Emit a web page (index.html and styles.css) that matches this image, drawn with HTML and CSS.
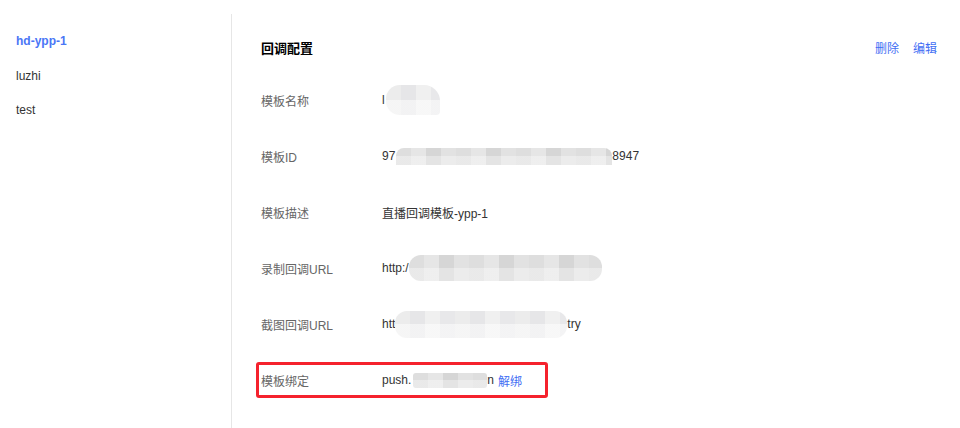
FILE: index.html
```html
<!DOCTYPE html>
<html lang="zh-CN">
<head>
  <meta charset="UTF-8">
  <title>回调配置</title>
  <link rel="stylesheet" href="styles.css">
</head>
<body>
  <div class="layout">
    <!-- 模板列表 -->
    <div class="sidebar">
      <div class="side-item active">hd-ypp-1</div>
      <div class="side-item">luzhi</div>
      <div class="side-item">test</div>
    </div>

    <!-- 详情 -->
    <div class="main">
      <div class="header">
        <span class="title">回调配置</span>
        <span class="actions">
          <a class="link">删除</a>
          <a class="link">编辑</a>
        </span>
      </div>

      <div class="row">
        <span class="label">模板名称</span>
        <span class="value">l<span class="blur blur-light name-blur"></span></span>
      </div>
      <div class="row">
        <span class="label">模板ID</span>
        <span class="value">97<span class="blur id-blur"></span>8947</span>
      </div>
      <div class="row">
        <span class="label">模板描述</span>
        <span class="value">直播回调模板-ypp-1</span>
      </div>
      <div class="row">
        <span class="label">录制回调URL</span>
        <span class="value">http:/<span class="blur rec-blur"></span></span>
      </div>
      <div class="row">
        <span class="label">截图回调URL</span>
        <span class="value">htt<span class="blur blur-light snap-blur"></span>try</span>
      </div>
      <div class="row">
        <div class="mark">
          <span class="label">模板绑定</span>
          <span class="value">push.<span class="blur push-blur"></span>n<a class="link unbind">解绑</a></span>
        </div>
      </div>
    </div>
  </div>
</body>
</html>
```

FILE: styles.css
```css
body {
  margin: 0;
  font-family: "Liberation Sans", Arial, "Noto Sans CJK SC", sans-serif;
  font-size: 12px;
  color: #333;
  background: #fff;
}
.layout {
  display: flex;
  min-height: 100vh;
  padding-top: 14px;
  box-sizing: border-box;
}
.sidebar {
  width: 232px;
  flex-shrink: 0;
  border-right: 1px solid #e6e6e6;
  padding-top: 10px;
  box-sizing: border-box;
}
.side-item {
  height: 34.5px;
  line-height: 34px;
  padding-left: 16px;
  color: #333;
}
.side-item.active {
  color: #4a76f6;
  font-weight: bold;
}
.main {
  flex: 1;
  padding: 0 23px 0 29px;
}
.header {
  display: flex;
  justify-content: space-between;
  align-items: center;
  padding-top: 25px;
  line-height: 20px;
  margin-bottom: 13px;
}
.title {
  font-size: 13px;
  font-weight: bold;
  color: #000;
}
.actions {
  display: flex;
  gap: 14px;
}
.link {
  color: #3f6ef4;
  cursor: pointer;
}
.unbind {
  margin-left: 4px;
}
.row {
  display: flex;
  align-items: center;
  height: 56px;
}
.label {
  width: 121px;
  flex-shrink: 0;
  color: #666;
}
.value {
  display: flex;
  align-items: center;
  color: #333;
  white-space: nowrap;
}
.mark {
  display: flex;
  align-items: center;
  width: 292px;
  height: 36px;
  margin-left: -5px;
  padding-left: 2px;
  border: 3px solid #f5222d;
  border-radius: 3px;
  box-sizing: border-box;
}
.blur {
  display: inline-block;
  border-radius: 8px;
  background:
    linear-gradient(180deg, rgba(255,255,255,0) 0 50%, rgba(255,255,255,0.35) 50% 100%),
    repeating-linear-gradient(90deg, #dedede 0 15px, #e6e6e6 15px 30px, #d6d6d6 30px 45px, #e2e2e2 45px 60px);
}
.blur-light {
  background:
    linear-gradient(180deg, rgba(255,255,255,0) 0 50%, rgba(255,255,255,0.5) 50% 100%),
    repeating-linear-gradient(90deg, #ececec 0 15px, #e6e6e8 15px 30px, #f0f0f0 30px 45px, #e8e8ea 45px 60px);
}
.name-blur {
  width: 54px;
  height: 30px;
  margin-left: 1px;
  border-radius: 14px 16px 4px 14px;
}
.id-blur {
  width: 216px;
  height: 17px;
  margin-left: 1px;
  border-radius: 8px 8px 0 0;
}
.rec-blur {
  width: 193px;
  height: 26px;
  border-radius: 12px;
}
.snap-blur {
  width: 172px;
  height: 27px;
  border-radius: 12px;
}
.push-blur {
  width: 74px;
  height: 15px;
  margin-left: 2px;
  border-radius: 3px;
}
```
